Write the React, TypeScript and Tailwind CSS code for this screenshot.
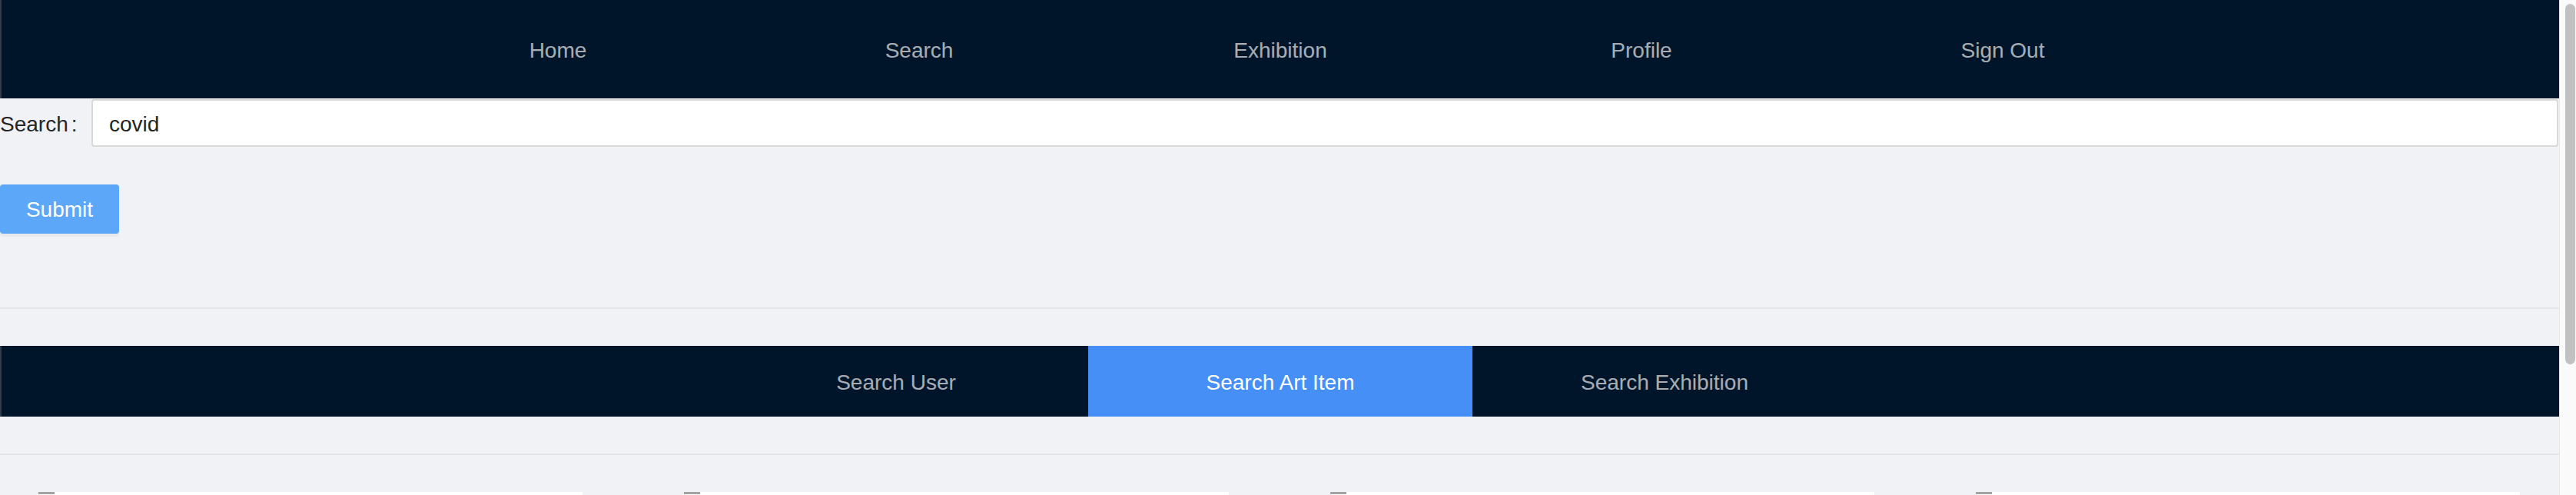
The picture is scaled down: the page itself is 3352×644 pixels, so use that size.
const navItems = ['Home', 'Search', 'Exhibition', 'Profile', 'Sign Out']
const tabs = ['Search User', 'Search Art Item', 'Search Exhibition']

export default function App() {
  const active = 'Search Art Item'

  return (
    <div className="flex h-screen w-full overflow-hidden bg-[#f0f2f5] font-['Liberation_Sans',Arial,sans-serif]">
      <main className="flex min-w-0 flex-1 flex-col">
        {/* Header */}
        <header className="flex h-[128px] shrink-0 justify-center border-l-2 border-[#2f3b48] bg-[#001529]">
          {navItems.map(item => (
            <a key={item} className="flex w-[470px] items-center justify-center pt-[3px] text-[28px] text-white/65">
              {item}
            </a>
          ))}
        </header>

        {/* Search form */}
        <div className="mt-[1px] flex h-[62px] shrink-0 items-center">
          <label className="flex w-[119px] items-center pt-[3px] text-[28px] text-[#262626]">
            Search
            <span className="ml-[4px]">:</span>
          </label>
          <input
            readOnly
            value="covid"
            className="h-[62px] flex-1 rounded-[4px] border-2 border-[#d9d9d9] bg-white px-[21px] pt-[3px] text-[28px] text-[#262626] outline-none"
          />
          <div className="w-[1px]" />
        </div>

        <div className="mt-[49px] shrink-0">
          <button className="h-[64px] w-[155px] rounded-[4px] bg-[#5ca7f8] pt-[2px] text-[28px] text-white shadow-[0_4px_0_rgba(0,0,0,0.04)]">
            Submit
          </button>
        </div>

        <div className="mt-[96px] h-[2px] shrink-0 bg-[#e3e5e9]" />

        {/* Tabs */}
        <nav className="mt-[48px] flex h-[92px] shrink-0 justify-center border-l-2 border-[#2f3b48] bg-[#001529]">
          {tabs.map(tab => (
            <button
              key={tab}
              className={
                tab === active
                  ? 'flex w-[500px] items-center justify-center bg-[#458ff7] pt-[3px] text-[28px] text-white'
                  : 'flex w-[500px] items-center justify-center pt-[3px] text-[28px] text-white/65'
              }
            >
              {tab}
            </button>
          ))}
        </nav>

        <div className="mt-[48px] h-[2px] shrink-0 bg-[#e3e5e9]" />

        {/* Results */}
        <div className="mt-[48px] grid shrink-0 grid-cols-4 gap-[132px] pl-[50px] pr-[51px]">
          {[0, 1, 2, 3].map(i => (
            <div key={i} className="flex h-[300px] flex-col bg-white">
              <div className="h-[3px] w-[21px] bg-[#a3a3a3]" />
            </div>
          ))}
        </div>
      </main>

      {/* Scrollbar */}
      <div className="flex w-[22px] shrink-0 border-l border-[#e8e8e8] bg-[#fafafa] pl-[7px] pr-[1px] pt-[5px]">
        <div className="h-[469px] w-[13px] rounded-full bg-[#c1c1c1]" />
      </div>
    </div>
  )
}
